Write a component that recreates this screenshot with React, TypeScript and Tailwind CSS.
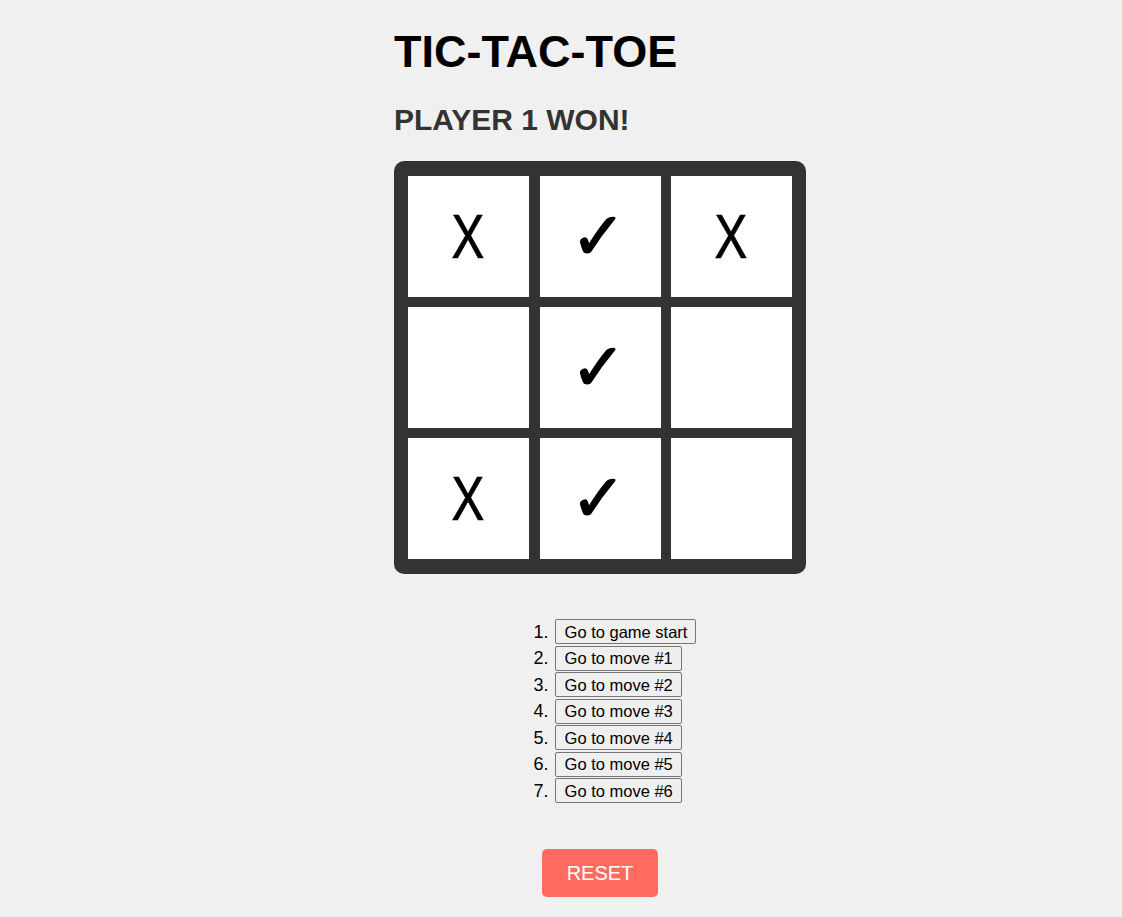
const board = ["X", "✓", "X", "", "✓", "", "X", "✓", ""];

const moves = [
  "Go to game start",
  "Go to move #1",
  "Go to move #2",
  "Go to move #3",
  "Go to move #4",
  "Go to move #5",
  "Go to move #6",
];

function Cell({ value }: { value: string }) {
  return (
    <div className="flex h-[121px] items-center justify-center bg-white text-black">
      {value === "X" && (
        <span className="inline-block scale-x-[0.78] text-[63px] leading-none [-webkit-text-stroke:0.7px_black]">X</span>
      )}
      {value === "✓" && (
        <span className="-ml-[3px] font-['DejaVu_Sans',sans-serif] text-[66px] leading-none [-webkit-text-stroke:1.5px_black]">
          ✓
        </span>
      )}
    </div>
  );
}

export default function App() {
  return (
    <div className="min-h-[917px] bg-[#f0f0f0] font-['Liberation_Sans',Arial,sans-serif]">
      <div className="ml-[394px] w-[412px] pt-[26px]">
        <h1 className="text-[45px] font-bold leading-[1.15] text-black">TIC-TAC-TOE</h1>
        <h2 className="mt-[25px] text-[30px] font-bold leading-[1.15] text-[#333]">PLAYER 1 WON!</h2>

        <div className="mt-[24px] grid grid-cols-3 gap-x-[10.5px] gap-y-[10px] rounded-[10px] bg-[#333] px-[14px] py-[15px]">
          {board.map((v, i) => (
            <Cell key={i} value={v} />
          ))}
        </div>

        <ol className="mx-auto mt-[45px] w-fit list-decimal pl-[50px] text-[18px] leading-none text-black">
          {moves.map((m, i) => (
            <li key={i} className="h-[26.5px] pl-[1px]">
              <button className="h-[25px] rounded-[2px] border border-[#767676] bg-[#efefef] pl-[9px] pr-[8px] text-[16.5px] leading-none text-black">
                {m}
              </button>
            </li>
          ))}
        </ol>

        <div className="mt-[44px] flex justify-center">
          <button className="h-[48px] w-[116px] rounded-[5px] bg-[#ff6b5f] text-[20px] text-white">
            RESET
          </button>
        </div>
      </div>
    </div>
  );
}
